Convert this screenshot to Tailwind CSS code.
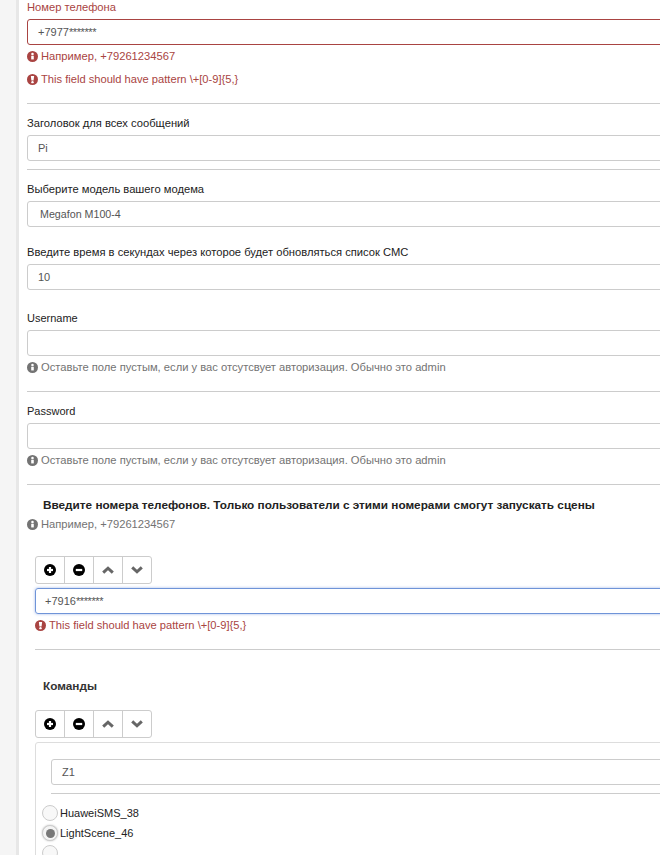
<!DOCTYPE html>
<html>
<head>
<meta charset="utf-8">
<script src="https://cdn.jsdelivr.net/npm/@tailwindcss/browser@4"></script>
</head>
<body class="bg-white overflow-hidden h-[855px] w-[660px] font-['Liberation_Sans',Arial,sans-serif] text-[11.2px] leading-[14px] text-[#333]">
<div class="flex h-[855px] w-[760px]">
  <div class="w-4 shrink-0 bg-[#f5f5f5]"></div>
  <div class="w-[3px] shrink-0 bg-[#e7e7e7]"></div>
  <main class="pl-2 w-[741px] shrink-0">
    <div class="h-[14px] text-[#a94442]">Номер телефона</div>
    <div class="mt-[5px] h-[26px] border border-[#a94442] rounded-[3px] px-[10px] flex items-center text-[#555] text-[11px]"><span>+7977<span class="tracking-[-0.4px]">*******</span></span></div>
    <div class="mt-1 h-[14px] flex items-center gap-[3px] text-[#a94442]">
      <svg class="w-[11px] h-[11px]" viewBox="0 0 12 12"><circle cx="6" cy="6" r="6" fill="currentColor"/><rect x="4.6" y="5.2" width="2.8" height="4" fill="#fff"/><circle cx="6" cy="3.3" r="1.4" fill="#fff"/></svg>
      <span>Например, +79261234567</span>
    </div>
    <div class="mt-[9px] h-[14px] flex items-center gap-[3px] text-[#a94442]">
      <svg class="w-[11px] h-[11px]" viewBox="0 0 12 12"><circle cx="6" cy="6" r="6" fill="currentColor"/><path d="M4.2 2.2h3.6L7.2 7H4.8z" fill="#fff"/><circle cx="6" cy="8.9" r="1.3" fill="#fff"/></svg>
      <span class="text-[11.15px]">This field should have pattern \+[0-9]{5,}</span>
    </div>
    <div class="mt-[17px] h-px bg-[#ccc]"></div>

    <div class="mt-[12px] h-[14px] text-[#222]">Заголовок для всех сообщений</div>
    <div class="mt-[5px] h-[26px] border border-[#ccc] rounded-[3px] px-[10px] flex items-center text-[#555] text-[11px]">Pi</div>
    <div class="mt-2 h-px bg-[#ccc]"></div>

    <div class="mt-[12px] h-[14px] text-[#222]">Выберите модель вашего модема</div>
    <div class="mt-[5px] h-[26px] border border-[#ccc] rounded-[3px] px-[12px] flex items-center text-[#555] text-[10.7px]">Megafon M100-4</div>

    <div class="mt-[18px] h-[14px] text-[#222]">Введите время в секундах через которое будет обновляться список СМС</div>
    <div class="mt-[5px] h-[26px] border border-[#ccc] rounded-[3px] px-[10px] flex items-center text-[#555] text-[11px]">10</div>

    <div class="mt-[21px] h-[14px] text-[#222] text-[11px]">Username</div>
    <div class="mt-[5px] h-[26px] border border-[#ccc] rounded-[3px]"></div>
    <div class="mt-1 h-[14px] flex items-center gap-[3px] text-[#737373]">
      <svg class="w-[11px] h-[11px]" viewBox="0 0 12 12"><circle cx="6" cy="6" r="6" fill="currentColor"/><rect x="4.6" y="5.2" width="2.8" height="4" fill="#fff"/><circle cx="6" cy="3.3" r="1.4" fill="#fff"/></svg>
      <span>Оставьте поле пустым, если у вас отсутсвует авторизация. Обычно это admin</span>
    </div>
    <div class="mt-[17px] h-px bg-[#ccc]"></div>

    <div class="mt-[12px] h-[14px] text-[#222] text-[11px]">Password</div>
    <div class="mt-[5px] h-[26px] border border-[#ccc] rounded-[3px]"></div>
    <div class="mt-1 h-[14px] flex items-center gap-[3px] text-[#737373]">
      <svg class="w-[11px] h-[11px]" viewBox="0 0 12 12"><circle cx="6" cy="6" r="6" fill="currentColor"/><rect x="4.6" y="5.2" width="2.8" height="4" fill="#fff"/><circle cx="6" cy="3.3" r="1.4" fill="#fff"/></svg>
      <span>Оставьте поле пустым, если у вас отсутсвует авторизация. Обычно это admin</span>
    </div>
    <div class="mt-[17px] h-px bg-[#ccc]"></div>

    <div class="mt-[13px] h-[14px] pl-4 text-[11.77px] font-bold text-[#222]">Введите номера телефонов. Только пользователи с этими номерами смогут запускать сцены</div>
    <div class="mt-[5px] h-[14px] flex items-center gap-[3px] text-[#737373]">
      <svg class="w-[11px] h-[11px]" viewBox="0 0 12 12"><circle cx="6" cy="6" r="6" fill="currentColor"/><rect x="4.6" y="5.2" width="2.8" height="4" fill="#fff"/><circle cx="6" cy="3.3" r="1.4" fill="#fff"/></svg>
      <span>Например, +79261234567</span>
    </div>

    <div class="ml-2 mt-[25px]">
      <div class="flex w-[117px] h-[28px] border border-[#ccc] rounded-[3px] divide-x divide-[#ccc]">
        <div class="flex-1 flex items-center justify-center pb-px"><svg class="w-3 h-3" viewBox="0 0 12 12"><circle cx="6" cy="6" r="6" fill="#000"/><rect x="3" y="4.9" width="6" height="2.2" fill="#fff"/><rect x="4.9" y="3" width="2.2" height="6" fill="#fff"/></svg></div>
        <div class="flex-1 flex items-center justify-center pb-px"><svg class="w-3 h-3" viewBox="0 0 12 12"><circle cx="6" cy="6" r="6" fill="#000"/><rect x="2.8" y="4.9" width="6.4" height="2.2" fill="#fff"/></svg></div>
        <div class="flex-1 flex items-center justify-center pb-px"><svg class="w-3 h-2" viewBox="0 0 12 8"><path d="M1.2 6.6 6 2.2l4.8 4.4" fill="none" stroke="#666" stroke-width="3"/></svg></div>
        <div class="flex-1 flex items-center justify-center pb-px"><svg class="w-3 h-2" viewBox="0 0 12 8"><path d="M1.2 1.4 6 5.8l4.8-4.4" fill="none" stroke="#666" stroke-width="3"/></svg></div>
      </div>
      <div class="mt-1 h-[26px] border border-[#6f94d8] shadow-[0_0_3px_rgba(102,140,220,0.6)] rounded-[3px] px-[9px] flex items-center text-[#555] text-[11px]"><span>+7916<span class="tracking-[-0.4px]">*******</span></span></div>
      <div class="mt-1 h-[14px] flex items-center gap-[3px] text-[#a94442]">
        <svg class="w-[11px] h-[11px]" viewBox="0 0 12 12"><circle cx="6" cy="6" r="6" fill="currentColor"/><path d="M4.2 2.2h3.6L7.2 7H4.8z" fill="#fff"/><circle cx="6" cy="8.9" r="1.3" fill="#fff"/></svg>
        <span class="text-[11.15px]">This field should have pattern \+[0-9]{5,}</span>
      </div>
      <div class="mt-[17px] h-px bg-[#ccc]"></div>

      <div class="mt-[29px] h-[14px] pl-2 text-[11.77px] font-bold text-[#333]">Команды</div>
      <div class="mt-[17px] flex w-[117px] h-[28px] border border-[#ccc] rounded-[3px] divide-x divide-[#ccc]">
        <div class="flex-1 flex items-center justify-center pb-px"><svg class="w-3 h-3" viewBox="0 0 12 12"><circle cx="6" cy="6" r="6" fill="#000"/><rect x="3" y="4.9" width="6" height="2.2" fill="#fff"/><rect x="4.9" y="3" width="2.2" height="6" fill="#fff"/></svg></div>
        <div class="flex-1 flex items-center justify-center pb-px"><svg class="w-3 h-3" viewBox="0 0 12 12"><circle cx="6" cy="6" r="6" fill="#000"/><rect x="2.8" y="4.9" width="6.4" height="2.2" fill="#fff"/></svg></div>
        <div class="flex-1 flex items-center justify-center pb-px"><svg class="w-3 h-2" viewBox="0 0 12 8"><path d="M1.2 6.6 6 2.2l4.8 4.4" fill="none" stroke="#666" stroke-width="3"/></svg></div>
        <div class="flex-1 flex items-center justify-center pb-px"><svg class="w-3 h-2" viewBox="0 0 12 8"><path d="M1.2 1.4 6 5.8l4.8-4.4" fill="none" stroke="#666" stroke-width="3"/></svg></div>
      </div>
      <div class="mt-1 border border-[#ddd] rounded-[3px] pt-4 pl-[6px] h-[120px]">
        <div class="ml-[9px] h-[26px] border border-[#ccc] rounded-[3px] px-[10px] flex items-center text-[#555] text-[11px]">Z1</div>
        <div class="ml-[9px] mt-2 h-px bg-[#ccc]"></div>
        <div class="mt-[9px] h-[20px] flex items-center gap-[2px] text-[#222] text-[11px]">
          <span class="w-4 h-4 rounded-full border border-[#ccc] bg-[#f8f8f8]"></span><span>HuaweiSMS_38</span>
        </div>
        <div class="h-[20px] flex items-center gap-[2px] text-[#222] text-[11px]">
          <span class="w-4 h-4 rounded-full border border-[#ccc] bg-[#f4f4f4] shadow-[0_0_2px_#bbb] flex items-center justify-center"><span class="w-[9px] h-[9px] rounded-full bg-[#777]"></span></span><span>LightScene_46</span>
        </div>
        <div class="h-[20px] flex items-center gap-[2px]">
          <span class="w-4 h-4 rounded-full border border-[#ccc] bg-[#f8f8f8]"></span>
        </div>
      </div>
    </div>
  </main>
</div>
</body>
</html>
